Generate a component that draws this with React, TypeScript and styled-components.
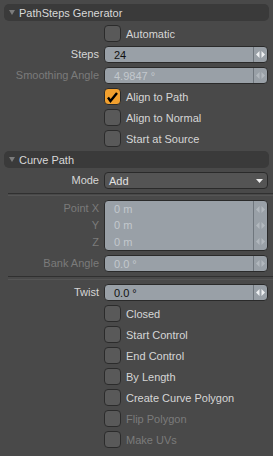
import { FC, ReactNode } from 'react';
import styled, { createGlobalStyle } from 'styled-components';

const GlobalStyle = createGlobalStyle`
  html, body {
    margin: 0;
    padding: 0;
    background: #494949;
  }
  * {
    box-sizing: border-box;
  }
`;

const Panel = styled.div`
  width: 273px;
  height: 456px;
  padding: 4px 5px 0 4px;
  background: #494949;
  font-family: 'Liberation Sans', Arial, sans-serif;
  font-size: 11px;
  color: #d6d6d6;
  display: flex;
  flex-direction: column;
  gap: 4px;
  overflow: hidden;
`;

const Header = styled.div`
  height: 17px;
  flex: none;
  margin-right: -1px;
  border-radius: 5px;
  background: #3a3a3a;
  display: flex;
  align-items: center;
  gap: 4px;
  padding-left: 5px;
  font-size: 11px;
  color: #d8d8d8;
`;

const Row = styled.div`
  flex: none;
  display: grid;
  grid-template-columns: 95px 164px;
  column-gap: 5px;
  align-items: start;
`;

const Labels = styled.div`
  display: flex;
  flex-direction: column;
`;

const Label = styled.div<{ $disabled?: boolean }>`
  height: 17px;
  line-height: 17px;
  text-align: right;
  white-space: nowrap;
  color: ${(p) => (p.$disabled ? '#7b7b7b' : '#d6d6d6')};
`;

const Field = styled.div<{ $rows: number }>`
  height: ${(p) => p.$rows * 17}px;
  border: 1px solid #2a2a2a;
  border-radius: 4px;
  background: #99a0a7;
  display: grid;
  grid-template-columns: 1fr 14px;
  grid-template-rows: repeat(${(p) => p.$rows}, 1fr);
  overflow: hidden;
`;

const Value = styled.div<{ $disabled?: boolean }>`
  padding-left: 9px;
  display: flex;
  align-items: center;
  color: ${(p) => (p.$disabled ? '#c3c8cd' : '#111111')};
`;

const Spinner = styled.div<{ $disabled?: boolean }>`
  border-left: 1px solid #6f767d;
  display: flex;
  align-items: center;
  justify-content: center;
  color: ${(p) => (p.$disabled ? '#b2b8be' : '#eef0f2')};
`;

const Dropdown = styled.div`
  height: 17px;
  border: 1px solid #2a2a2a;
  border-radius: 4px;
  background: #545454;
  display: flex;
  align-items: center;
  justify-content: space-between;
  padding: 0 4px;
  color: #e2e2e2;
`;

const CheckRow = styled.label`
  flex: none;
  margin-left: 100px;
  height: 17px;
  display: flex;
  align-items: center;
  gap: 5px;
`;

const Box = styled.span<{ $on?: boolean }>`
  width: 17px;
  height: 17px;
  border-radius: 4px;
  border: 1px solid #2b2b2b;
  background: ${(p) => (p.$on ? '#f2a02e' : '#595959')};
  display: flex;
  align-items: center;
  justify-content: center;
`;

const CheckText = styled.span<{ $disabled?: boolean }>`
  color: ${(p) => (p.$disabled ? '#7b7b7b' : '#d6d6d6')};
  white-space: nowrap;
`;

const Separator = styled.div<{ $h: number }>`
  flex: none;
  height: ${(p) => p.$h}px;
  margin: 0 -5px 0 4px;
  border-top: 1px solid #303030;
  border-bottom: 1px solid #555555;
`;

const Arrows: FC = () => (
  <svg width="9" height="9" viewBox="0 0 9 9">
    <path d="M0 4.5 L3.5 1 L3.5 8 Z M5.5 1 L9 4.5 L5.5 8 Z" fill="currentColor" />
  </svg>
);

const Tri: FC<{ color: string; w: number; h: number }> = ({ color, w, h }) => (
  <svg width={w} height={h} viewBox={`0 0 ${w} ${h}`}>
    <path d={`M0 0 L${w} 0 L${w / 2} ${h} Z`} fill={color} />
  </svg>
);

const Section: FC<{ title: string }> = ({ title }) => (
  <Header>
    <Tri color="#7c7c7c" w={6} h={5} />
    <span>{title}</span>
  </Header>
);

const Check: FC<{ label: string; on?: boolean; disabled?: boolean }> = ({ label, on, disabled }) => (
  <CheckRow>
    <Box $on={on}>
      {on && (
        <svg width="13" height="12" viewBox="0 0 13 12">
          <path d="M2 6.5 L4.5 10 L11 2" stroke="#000" strokeWidth="2.4" fill="none" />
        </svg>
      )}
    </Box>
    <CheckText $disabled={disabled}>{label}</CheckText>
  </CheckRow>
);

const FieldLine: FC<{ value: string; disabled?: boolean }> = ({ value, disabled }) => (
  <>
    <Value $disabled={disabled}>{value}</Value>
    <Spinner $disabled={disabled}>
      <Arrows />
    </Spinner>
  </>
);

const Numeric: FC<{ labels: string[]; values: string[]; disabled?: boolean }> = ({ labels, values, disabled }) => (
  <Row>
    <Labels>
      {labels.map((l) => (
        <Label key={l} $disabled={disabled}>
          {l}
        </Label>
      ))}
    </Labels>
    <Field $rows={values.length}>
      {values.map((v, i) => (
        <FieldLine key={i} value={v} disabled={disabled} />
      ))}
    </Field>
  </Row>
);

const Choice: FC<{ label: string; children: ReactNode }> = ({ label, children }) => (
  <Row>
    <Labels>
      <Label>{label}</Label>
    </Labels>
    <Dropdown>
      <span>{children}</span>
      <Tri color="#f0f0f0" w={7} h={4} />
    </Dropdown>
  </Row>
);

export default function App() {
  return (
    <>
      <GlobalStyle />
      <Panel>
        <Section title="PathSteps Generator" />
        <Check label="Automatic" />
        <Numeric labels={['Steps']} values={['24']} />
        <Numeric labels={['Smoothing Angle']} values={['4.9847 °']} disabled />
        <Check label="Align to Path" on />
        <Check label="Align to Normal" />
        <Check label="Start at Source" />
        <Section title="Curve Path" />
        <Choice label="Mode">Add</Choice>
        <Separator $h={3} />
        <Numeric labels={['Point X', 'Y', 'Z']} values={['0 m', '0 m', '0 m']} disabled />
        <Numeric labels={['Bank Angle']} values={['0.0 °']} disabled />
        <Separator $h={4} />
        <Numeric labels={['Twist']} values={['0.0 °']} />
        <Check label="Closed" />
        <Check label="Start Control" />
        <Check label="End Control" />
        <Check label="By Length" />
        <Check label="Create Curve Polygon" />
        <Check label="Flip Polygon" disabled />
        <Check label="Make UVs" disabled />
      </Panel>
    </>
  );
}
